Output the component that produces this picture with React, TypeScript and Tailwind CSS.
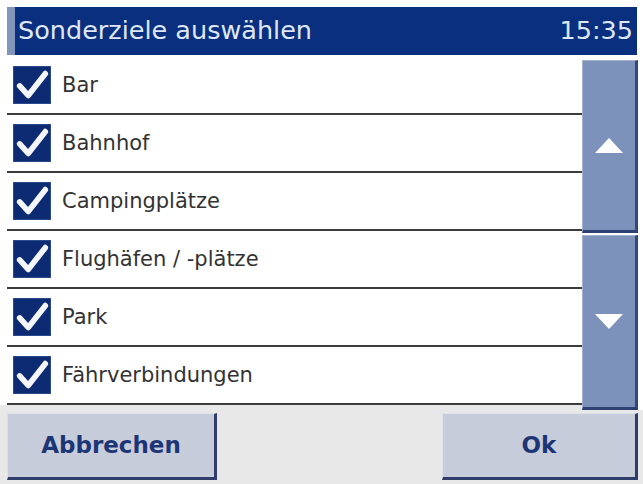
import React from "react";

const items = [
  "Bar",
  "Bahnhof",
  "Campingplätze",
  "Flughäfen / -plätze",
  "Park",
  "Fährverbindungen",
];

function Check() {
  return (
    <div className="w-[38px] h-[38px] bg-[#0c2b72] border border-[#294a8c] flex items-center justify-center shrink-0">
      <svg width="38" height="38" viewBox="0 0 38 38">
        <polyline
          points="6,20 15,30 33,7"
          fill="none"
          stroke="#f4f6fb"
          strokeWidth="6"
          strokeLinecap="round"
          strokeLinejoin="round"
        />
      </svg>
    </div>
  );
}

export default function App() {
  return (
    <div
      className="w-[643px] h-[484px] bg-white flex flex-col overflow-hidden"
      style={{ fontFamily: '"DejaVu Sans", Verdana, sans-serif' }}
    >
      <div className="pt-[7px] pl-[7px] pr-[6px] h-[55px] flex shrink-0">
        <div className="w-[8px] bg-[#8196ba]" />
        <div className="flex-1 bg-[#0a2f7f] flex items-center justify-between pl-[3px] pr-[4px] text-[#dfe7f6] text-[25.5px] leading-none">
          <span>Sonderziele auswählen</span>
          <span>15:35</span>
        </div>
      </div>
      <div className="h-[355px] flex shrink-0">
        <div className="flex-1 flex flex-col">
          <div className="pl-[7px] pt-[2px] bg-white">
            {items.map((t) => (
              <div
                key={t}
                className="h-[58px] border-b-2 border-[#3c3c3c] flex items-center pl-[6px] gap-[11px]"
              >
                <Check />
                <span className="text-[21px] text-[#333333] leading-none">{t}</span>
              </div>
            ))}
          </div>
          <div className="flex-1 bg-[#e8e8e8]" />
        </div>
        <div className="w-[61px] pr-[5px] pt-[5px] flex flex-col gap-[2px] bg-white">
          <div className="h-[173px] bg-[#7d92bb] border-t border-l border-[#a2b2d0] border-r-[3px] border-r-[#33487a] border-b-[3px] border-b-[#2c4173] flex items-center justify-center">
            <svg width="30" height="17" viewBox="0 0 30 17">
              <polygon points="15,1 29,16 1,16" fill="#ffffff" />
            </svg>
          </div>
          <div className="h-[175px] bg-[#7d92bb] border-t border-l border-[#a2b2d0] border-r-[3px] border-r-[#33487a] border-b-[3px] border-b-[#2c4173] flex items-center justify-center">
            <svg width="30" height="17" viewBox="0 0 30 17">
              <polygon points="1,1 29,1 15,16" fill="#ffffff" />
            </svg>
          </div>
        </div>
      </div>
      <div className="flex-1 bg-[#e8e8e8] pl-[7px] pr-[5px] pt-[3px] pb-[4px] flex justify-between">
        <button className="w-[210px] bg-[#c7ccda] border-t border-l border-[#dde1ea] border-r-[3px] border-r-[#2e3d6c] border-b-[3px] border-b-[#2e3d6c] flex items-center justify-center text-[#1c3575] font-bold text-[23px]">
          Abbrechen
        </button>
        <button className="w-[196px] bg-[#c7ccda] border-t border-l border-[#dde1ea] border-r-[3px] border-r-[#2e3d6c] border-b-[3px] border-b-[#2e3d6c] flex items-center justify-center text-[#1c3575] font-bold text-[23px]">
          Ok
        </button>
      </div>
    </div>
  );
}
